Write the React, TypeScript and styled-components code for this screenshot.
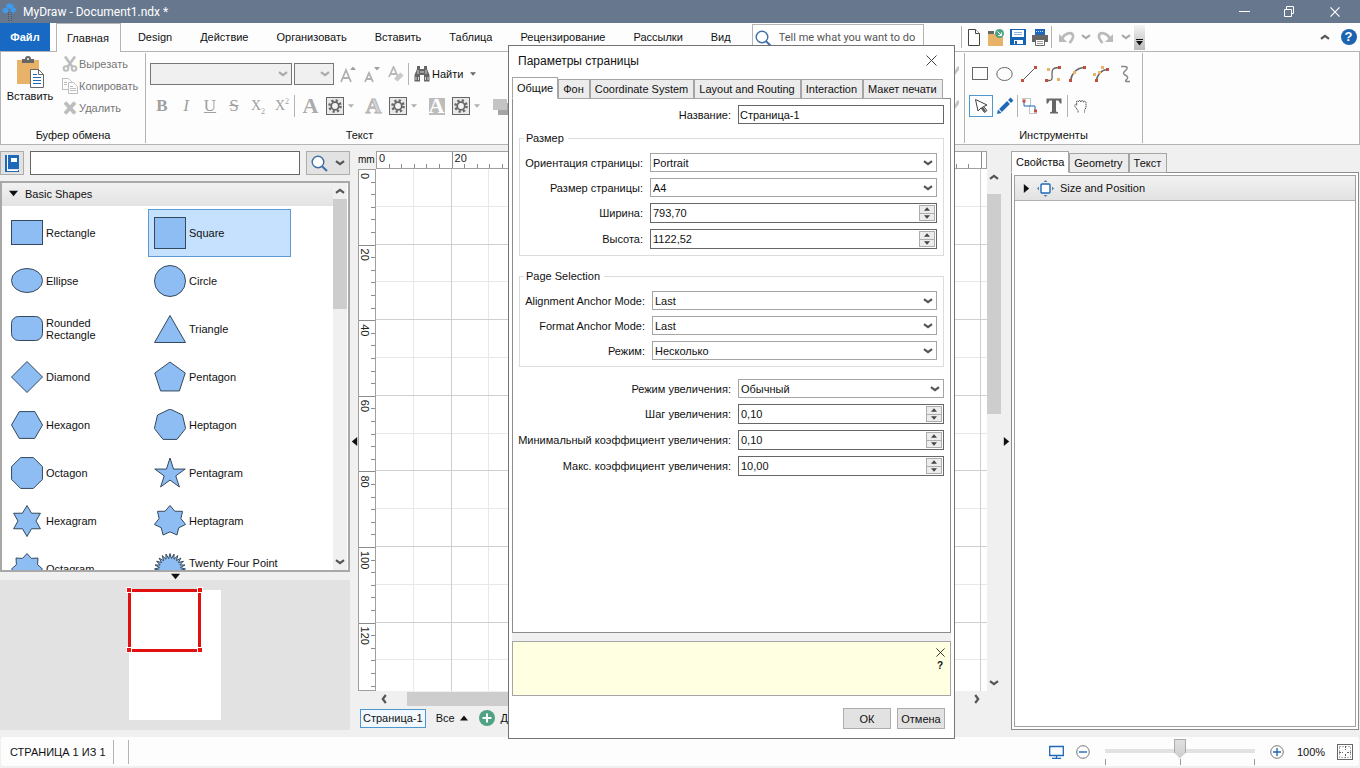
import React from "react";
import styled, { createGlobalStyle, css } from "styled-components";

const Global = createGlobalStyle`
  *, *::before, *::after { box-sizing: border-box; }
  body { margin: 0; background: #f0f0f0; }
  body, button, input, select { font-family: "Liberation Sans", Arial, sans-serif; font-size: 11px; color: #111; }
  button { margin: 0; padding: 0; border: 0; background: none; line-height: 14px; }
  input, select { margin: 0; border-radius: 0; outline: 0; }
  svg { display: block; flex: none; }
`;

/* ---------- frame ---------- */
const Page = styled.div`
  position: relative;
  display: flex;
  flex-direction: column;
  min-height: 100vh;
  background: #f0f0f0;
  padding-bottom: 2px;
  line-height: 14px;
  overflow: hidden;
`;
const TitleBar = styled.header`
  display: flex;
  align-items: center;
  height: 23px;
  background: #67778e;
  color: #fff;
`;
const TitleText = styled.h1`
  flex: 1;
  margin: 0;
  padding-left: 3px;
  font: 400 12px/16px Roboto, "Open Sans", sans-serif;
`;
const WinButton = styled.button`
  display: flex;
  align-items: center;
  justify-content: center;
  width: 45px;
  height: 20px;
  color: #fff;
`;
const WinButtons = styled.div`
  display: flex;
  padding-right: 3px;
`;

const MenuRow = styled.nav`
  position: relative;
  display: flex;
  align-items: center;
  height: 29px;
  background: #fdfdfd;
  border-bottom: 1px solid #b4b4b4;
`;
const FileTab = styled.button`
  align-self: flex-start;
  width: 50px;
  height: 28px;
  margin-right: 3px;
  background: #1769c4;
  color: #fff;
  font-weight: 700;
`;
const MenuTab = styled.button<{ $active?: boolean }>`
  height: 28px;
  padding: 0 14px;
  white-space: nowrap;
  ${(p) =>
    p.$active &&
    css`
      align-self: flex-end;
      height: 29px;
      margin: 0 3px -1px;
      padding: 0 11px 0 10px;
      background: #fdfdfd;
      border: 1px solid #b4b4b4;
      border-bottom: 0;
    `}
`;
const SearchBox = styled.label`
  display: flex;
  align-self: flex-end;
  align-items: center;
  width: 172px;
  height: 27px;
  margin: 0 37px 0 7px;
  padding-left: 2px;
  background: #fff;
  border: 1px solid #b4b4b4;
  border-bottom: 0;
  input {
    flex: 1;
    min-width: 0;
    border: 0;
    padding: 0 0 0 7px;
    background: none;
    font: 11px/16px Roboto, "Open Sans", sans-serif;
  }
  input::placeholder { color: #555; opacity: 1; }
`;
const QuickBar = styled.div`
  display: flex;
  align-items: center;
  height: 28px;
`;
const IconButton = styled.button<{ $w?: number; $h?: number; $on?: boolean }>`
  display: flex;
  flex: none;
  align-items: center;
  justify-content: center;
  width: ${(p) => p.$w ?? 24}px;
  height: ${(p) => p.$h ?? 22}px;
  border: ${(p) => (p.$on ? "1px solid #4f97d1" : "0")};
`;
const Rule = styled.span<{ $h?: number; $m?: number }>`
  flex: none;
  width: 1px;
  height: ${(p) => p.$h ?? 22}px;
  margin: 0 ${(p) => p.$m ?? 0}px;
  background: #b4b4b4;
`;
const Spacer = styled.span`
  flex: 1;
`;
const MoreStrip = styled.button`
  display: flex;
  align-items: flex-end;
  justify-content: center;
  width: 11px;
  height: 25px;
  margin-left: 3px;
  padding-bottom: 4px;
  background: linear-gradient(#f4f4f4, #b9b9b9);
`;

/* ---------- ribbon ---------- */
const Ribbon = styled.div`
  display: flex;
  height: 93px;
  background: #fdfdfd;
  border: 1px solid #b4b4b4;
  border-top: 0;
`;
const Group = styled.section<{ $w: number }>`
  display: flex;
  flex: none;
  flex-direction: column;
  justify-content: space-between;
  width: ${(p) => p.$w}px;
  margin: 1px 0;
  border-right: 1px solid #b4b4b4;
`;
const GroupTitle = styled.h2`
  margin: 0;
  padding-bottom: 1px;
  font-size: 11px;
  font-weight: 400;
  line-height: 14px;
  text-align: center;
`;
const ClipRow = styled.div`
  display: flex;
`;
const PasteButton = styled.button`
  display: flex;
  flex-direction: column;
  align-items: center;
  width: 58px;
  padding-top: 3px;
  gap: 1px;
`;
const ClipList = styled.div`
  display: flex;
  flex-direction: column;
  padding-left: 3px;
`;
const ClipItem = styled.button`
  display: flex;
  align-items: center;
  height: 22px;
  gap: 1px;
  color: #777;
`;
const ToolRows = styled.div`
  display: flex;
  flex-direction: column;
  gap: 10px;
  padding: 10px 0 0 4px;
`;
const ToolRow = styled.div`
  display: flex;
  align-items: center;
  height: 22px;
`;
const DisabledCombo = styled.span<{ $w: number }>`
  position: relative;
  display: flex;
  width: ${(p) => p.$w}px;
  height: 22px;
  margin-right: 2px;
  select {
    width: 100%;
    appearance: none;
    background: #f0f0f0;
    border: 1px solid #777;
    opacity: 1;
  }
`;
const ComboArrow = styled.span`
  position: absolute;
  right: 4px;
  top: 0;
  bottom: 0;
  display: flex;
  align-items: center;
  pointer-events: none;
`;
const Glyph = styled.span<{ $i?: boolean; $u?: boolean; $s?: boolean; $b?: boolean; $small?: boolean }>`
  font: ${(p) => (p.$i ? "italic" : "normal")} ${(p) => (p.$b ? 700 : 400)} ${(p) => (p.$small ? 14 : 17)}px/20px "Liberation Serif", serif;
  color: #a0a0a0;
  text-decoration: ${(p) => (p.$u ? "underline" : p.$s ? "line-through" : "none")};
  sub, sup { font-size: 8px; line-height: 1; }
`;
const FindButton = styled.button`
  display: flex;
  align-items: center;
  gap: 2px;
  margin-left: 5px;
`;
const BrushColumn = styled.div`
  display: flex;
  flex-direction: column;
  align-items: flex-end;
  gap: 24px;
  padding: 13px 5px 0 0;
`;

/* ---------- workspace ---------- */
const Workspace = styled.main`
  display: flex;
  flex: 1;
  min-height: 592px;
  padding-bottom: 7px;
`;
const LeftPanel = styled.aside`
  display: flex;
  flex: none;
  flex-direction: column;
  width: 350px;
`;
const LibraryBar = styled.div`
  display: flex;
  gap: 6px;
  padding: 6px 0;
  input {
    flex: 1;
    min-width: 0;
    height: 24px;
    background: #fff;
    border: 1px solid #666;
  }
`;
const PushButton = styled.button<{ $w: number; $h?: number }>`
  display: flex;
  align-items: center;
  justify-content: center;
  gap: 7px;
  width: ${(p) => p.$w}px;
  height: ${(p) => p.$h ?? 24}px;
  background: #e2e2e2;
  border: 1px solid #adadad;
`;
const Library = styled.div`
  display: flex;
  flex: 1 1 0;
  min-height: 0;
  padding-right: 1px;
  background: #fff;
  border: 2px solid #a8a8a8;
  overflow: hidden;
`;
const LibraryMain = styled.div`
  flex: 1;
  min-width: 0;
  overflow: hidden;
`;
const LibraryHead = styled.button`
  display: flex;
  align-items: center;
  gap: 7px;
  width: 100%;
  height: 23px;
  padding: 0 0 2px 7px;
  background: linear-gradient(#f1f1f1, #e3e3e3);
`;
const ShapeGrid = styled.ul`
  display: grid;
  grid-template-columns: 143px 143px;
  grid-auto-rows: 48px;
  margin: 0;
  padding: 3px;
  list-style: none;
`;
const ShapeItem = styled.li<{ $on?: boolean }>`
  display: flex;
  align-items: center;
  gap: 3px;
  padding-left: 5px;
  line-height: 12px;
  border: 1px solid ${(p) => (p.$on ? "#5b9bd3" : "transparent")};
  background: ${(p) => (p.$on ? "#c5e1fe" : "none")};
  span { max-width: 94px; }
`;
const VScroll = styled.div`
  display: flex;
  flex: none;
  flex-direction: column;
  align-items: center;
  justify-content: space-between;
  width: 14px;
  background: #f0f0f0;
`;
const VThumb = styled.span<{ $h: number; $top?: number }>`
  display: block;
  width: 14px;
  height: ${(p) => p.$h}px;
  margin-top: ${(p) => p.$top ?? 0}px;
  background: #cdcdcd;
`;
const ArrowButton = styled.button<{ $w?: number; $h?: number }>`
  display: flex;
  flex: none;
  align-items: center;
  justify-content: center;
  width: ${(p) => p.$w ?? 14}px;
  height: ${(p) => p.$h ?? 16}px;
`;
const Splitter = styled.div<{ $v?: boolean }>`
  display: flex;
  flex: none;
  align-items: center;
  justify-content: center;
  ${(p) => (p.$v ? "width: 8px; padding-top: 7px;" : "height: 8px;")}
`;
const Preview = styled.div`
  display: flex;
  flex: none;
  justify-content: center;
  height: 150px;
  padding-top: 10px;
  background: #e2e2e2;
`;
const PreviewPage = styled.div`
  width: 92px;
  height: 130px;
  background: #fff;
`;

const Center = styled.section`
  display: flex;
  flex: 1;
  flex-direction: column;
  min-width: 0;
  padding: 6px 0 0;
`;
const CanvasGrid = styled.div`
  display: grid;
  flex: 1;
  grid-template-columns: 18px minmax(0, 1fr) 15px;
  grid-template-rows: 18px minmax(0, 1fr) 15px;
  min-height: 0;
`;
const Unit = styled.span`
  font-size: 10px;
  line-height: 18px;
`;
const Ruler = styled.div`
  background: #fff;
  border: 1px solid #a0a0a0;
  overflow: hidden;
`;
const Canvas = styled.div`
  background: #fff;
  overflow: hidden;
`;
const HScroll = styled.div`
  display: flex;
  grid-column: 2;
  align-items: center;
  padding-top: 1px;
`;
const HThumb = styled.span`
  flex: 1;
  height: 14px;
  margin: 0 0 0 15px;
  background: #cdcdcd;
`;
const HTrack = styled.span`
  width: 10%;
`;
const PageTabs = styled.div`
  display: flex;
  align-items: center;
  gap: 10px;
  height: 24px;
  padding-left: 2px;
`;
const PageTab = styled.button`
  height: 19px;
  padding: 0 2px;
  border: 1px solid #4f97d1;
  background: #f2f8fd;
`;
const InlineButton = styled.button`
  display: flex;
  align-items: center;
  gap: 5px;
`;

const RightPanel = styled.aside`
  display: flex;
  flex: none;
  flex-direction: column;
  width: 350px;
  padding: 6px 1px 0;
`;
const TabStrip = styled.div`
  display: flex;
  align-items: flex-end;
  position: relative;
  margin-bottom: -1px;
`;
const Tab = styled.button<{ $active?: boolean }>`
  height: ${(p) => (p.$active ? 22 : 20)}px;
  padding: 0 5px 0 4px;
  white-space: nowrap;
  border: 1px solid #a5a5a5;
  background: #ececec;
  ${(p) =>
    p.$active &&
    css`
      padding: 0 4px;
      background: #fff;
      border-bottom-color: #fff;
    `}
`;
const PropsFrame = styled.div`
  flex: 1;
  padding: 2px;
  background: #fff;
  border: 1px solid #8c8c8c;
`;
const PropsInner = styled.div`
  height: 100%;
  border: 1px solid #a0a0a0;
`;
const PropsHead = styled.button`
  display: flex;
  align-items: center;
  gap: 6px;
  width: 100%;
  height: 25px;
  padding-left: 7px;
  background: linear-gradient(#f2f2f2, #e2e2e2);
  border-bottom: 1px solid #b0b0b0;
`;

/* ---------- status bar ---------- */
const StatusBar = styled.footer`
  display: flex;
  align-items: center;
  height: 29px;
  margin: 0 1px;
  padding: 0 0 0 9px;
  background: #fdfdfd;
  border-radius: 3px;
`;
const Zoom = styled.div`
  display: flex;
  flex-direction: column;
  width: 150px;
  margin: 0 15px 0 7px;
  input {
    appearance: none;
    width: 100%;
    height: 20px;
    background: linear-gradient(#e2e2e2, #e2e2e2) 0 10px / 100% 4px no-repeat;
  }
  input::-webkit-slider-thumb {
    appearance: none;
    width: 12px;
    height: 20px;
    background: linear-gradient(#e0e0e0, #cfcfcf);
    border: 1px solid #aaa;
    clip-path: polygon(0 0, 100% 0, 100% 70%, 50% 100%, 0 70%);
  }
`;
const Ticks = styled.div`
  display: flex;
  justify-content: space-between;
  span { width: 1px; height: 6px; background: #999; }
`;
const ZoomText = styled.output`
  width: 47px;
  padding-left: 13px;
`;

/* ---------- dialog ---------- */
const Dialog = styled.div`
  position: absolute;
  top: 45px;
  bottom: 29px;
  left: 508px;
  display: flex;
  flex-direction: column;
  width: 447px;
  padding: 0 3px;
  background: #fff;
  border: 1px solid #757575;
`;
const DialogHead = styled.div`
  display: flex;
  align-items: center;
  justify-content: space-between;
  height: 31px;
  padding: 0 8px 2px 6px;
`;
const DialogTitle = styled.h2`
  margin: 0;
  font-size: 12px;
  font-weight: 400;
  line-height: 16px;
`;
const DialogPanel = styled.form`
  display: flex;
  flex: 1;
  flex-direction: column;
  gap: 6px;
  padding: 6px;
  border: 1px solid #8c8c8c;
`;
const Row = styled.div<{ $label: number }>`
  display: grid;
  grid-template-columns: ${(p) => p.$label}px minmax(0, 1fr);
  align-items: center;
  gap: 7px;
  label { justify-self: end; white-space: nowrap; }
`;
const Fieldset = styled.fieldset`
  display: flex;
  flex-direction: column;
  gap: 6px;
  min-width: 0;
  margin: 1px 0 0;
  padding: 8px 6px 6px;
  border: 1px solid #dcdcdc;
  & + & { margin-top: 7px; }
`;
const Legend = styled.legend`
  margin-left: -2px;
  padding: 0 4px 0 2px;
  line-height: 14px;
`;
const SelectWrap = styled.span`
  position: relative;
  display: flex;
  height: 19px;
  select {
    width: 100%;
    appearance: none;
    padding: 0 2px;
    background: #fff;
    border: 1px solid #a5a5a5;
  }
`;
const SpinWrap = styled.span`
  display: flex;
  height: 20px;
  padding: 1px;
  background: #fff;
  border: 1px solid #666;
  input { flex: 1; min-width: 0; padding: 0 1px; border: 0; background: none; }
`;
const SpinButtons = styled.span`
  display: flex;
  flex-direction: column;
  width: 16px;
  button {
    display: flex;
    flex: 1;
    align-items: center;
    justify-content: center;
    background: #ececec;
    border: 1px solid #adadad;
  }
  button + button { margin-top: -1px; }
`;
const TextBox = styled.input`
  height: 19px;
  width: 100%;
  padding: 0 1px;
  background: #fff;
  border: 1px solid #666;
`;
const Stack = styled.div`
  display: flex;
  flex-direction: column;
  gap: 6px;
  padding-top: 6px;
`;
const Gap = styled.div`
  height: 8px;
  background: #f0f0f0;
`;
const Hint = styled.div`
  display: flex;
  flex-direction: column;
  align-items: flex-end;
  height: 55px;
  padding: 3px 4px;
  background: #ffffe1;
  border: 1px solid #a5a5a5;
  button {
    display: flex;
    align-items: center;
    justify-content: center;
    width: 12px;
    height: 14px;
    font-size: 10px;
    font-weight: 700;
  }
`;
const DialogFoot = styled.div`
  display: flex;
  justify-content: flex-end;
  gap: 6px;
  padding: 12px 6px 9px;
`;

/* ---------- small drawings ---------- */
const Chevron = ({ dir = "down", color = "#555", w = 10 }: { dir?: string; color?: string; w?: number }) => {
  const deg = { down: 0, left: 90, up: 180, right: 270 }[dir];
  return (
    <svg width={w} height={w} viewBox="0 0 10 10">
      <path d="M1 3.2 5 6.2 9 3.2" transform={`rotate(${deg} 5 5)`} fill="none" stroke={color} strokeWidth="2.2" />
    </svg>
  );
};
const Tri = ({ dir = "down", w = 6, color = "#111" }: { dir?: string; w?: number; color?: string }) => {
  const d: Record<string, string> = {
    down: "M0 2h10L5 8z",
    up: "M0 8h10L5 2z",
    left: "M8 0v10L2 5z",
    right: "M2 0v10l6-5z",
  };
  return (
    <svg width={w} height={w} viewBox="0 0 10 10">
      <path d={d[dir]} fill={color} />
    </svg>
  );
};
const Cross = ({ s = 11, color = "#555", w = 1 }: { s?: number; color?: string; w?: number }) => (
  <svg width={s} height={s} viewBox="0 0 11 11">
    <path d="M.5.5l10 10M10.5.5l-10 10" stroke={color} strokeWidth={w} />
  </svg>
);
const Magnifier = ({ s = 17 }: { s?: number }) => (
  <svg width={s} height={s} viewBox="0 0 17 17" fill="none">
    <circle cx="7" cy="7" r="5.8" stroke="#3f6fa5" strokeWidth="1.4" fill="#fff" />
    <path d="M11 11.2l5 4.8" stroke="#3f6fa5" strokeWidth="2" />
  </svg>
);
const Logo = () => (
  <svg width="20" height="20" viewBox="0 0 20 20">
    <path d="M8.500 10v9M11.500 10v9" stroke="#475263" strokeDasharray="1 1" />
    <g fill="#3d9cf0">
      <path d="M6 3l3-1.500 4 1L14 5l-3 2-4-1z" />
      <path d="M2.500 7.500L5 5.500l3 1 .5 3L6 11.500l-3-1z" />
      <path d="M10.500 8L13 5.500l3 1V9l-3 2-2-1z" />
    </g>
  </svg>
);
const PasteIcon = () => (
  <svg width="30" height="32" viewBox="0 0 30 32">
    <rect x="2" y="4" width="22" height="24" fill="#e8b269" />
    <path d="M7 3h3a3 3 0 016 0h3v4H7z" fill="#666" />
    <circle cx="13" cy="3" r="1" fill="#fff" />
    <path d="M15.500 13.500h8l5 5v13h-13z" fill="#fff" stroke="#666" />
    <path d="M23.500 13.500v5h5" fill="none" stroke="#666" />
    <path d="M18 18.500h4M18 21.500h8M18 24.500h8M18 27.500h8" stroke="#1d68b8" />
  </svg>
);
const CutIcon = () => (
  <svg width="16" height="16" viewBox="0 0 16 16" fill="none" stroke="#bdbdbd" strokeWidth="2.600">
    <path d="M3 .5l7.500 10.500M13 .5L5.500 11" />
    <circle cx="4" cy="12.500" r="2.300" strokeWidth="2" />
    <circle cx="12" cy="12.500" r="2.300" strokeWidth="2" />
  </svg>
);
const CopyIcon = () => (
  <svg width="16" height="16" viewBox="0 0 16 16" fill="#fdfdfd" stroke="#bdbdbd">
    <path d="M.5.5h6l3 3v8h-9z" />
    <path d="M6.500 4.500h5l4 4v7h-9z" />
    <path d="M8 8.500h3M8 10.500h6M8 12.500h6M2 4.500h3M2 6.500h3" />
  </svg>
);
const DeleteIcon = () => (
  <svg width="16" height="14" viewBox="0 0 16 14" stroke="#bdbdbd" strokeWidth="3.800">
    <path d="M3 1.500l10 11M13 1.500l-10 11" />
  </svg>
);
const FontSizeIcon = ({ up }: { up?: boolean }) => (
  <svg width="16" height="17" viewBox="0 0 16 17" fill="none" stroke="#b0b0b0" strokeWidth="1.800">
    <path d={up ? "M1 16L6 4l5 12M3 12h6" : "M1 16L5 7l4 9M3 13h4"} />
    <path d={up ? "M10 4h6l-3-3.500z" : "M10 1h6l-3 3.500z"} fill="#a0a0a0" stroke="none" />
  </svg>
);
const ClearIcon = () => (
  <svg width="16" height="17" viewBox="0 0 16 17" fill="none" stroke="#b8b8b8" strokeWidth="1.800">
    <path d="M1 11L5.500 1 10 11M3 8h5" />
    <path d="M6.500 12.500l6-5.500L15 9.500 9.500 15z" fill="#c8c8c8" stroke="#c8c8c8" strokeWidth="1" />
  </svg>
);
const Binoculars = () => (
  <svg width="16" height="16" viewBox="0 0 16 16">
    <g fill="#666">
      <path d="M3 0h3v3h4V0h3v3l2.500 6v6.500H10V9H6v6.500H.5V9L3 3z" />
    </g>
    <path d="M4 4v4M12 4v4M2 11v3M4.500 11v3M11.500 11v3M14 11v3M6 6h4" stroke="#d5d5d5" />
  </svg>
);
const Gear = () => (
  <svg width="18" height="18" viewBox="0 0 18 18">
    <rect x=".5" y=".5" width="17" height="17" fill="#e9e9e9" stroke="#666" />
    <circle cx="9" cy="9" r="5.600" fill="none" stroke="#666" strokeWidth="2.400" strokeDasharray="2.200 2.200" />
    <circle cx="9" cy="9" r="3.800" fill="#f4f4f4" stroke="#666" strokeWidth="1.800" />
  </svg>
);
const BigA = styled.span<{ $kind: "fill" | "outline" | "back" }>`
  width: 16px;
  height: 17px;
  font: 700 22px/15px "Liberation Serif", serif;
  text-align: center;
  color: ${(p) => (p.$kind === "fill" ? "#ababab" : p.$kind === "outline" ? "#d4d4d4" : "#fff")};
  -webkit-text-stroke: ${(p) => (p.$kind === "outline" ? "1px #b4b4b4" : "0")};
  background: ${(p) => (p.$kind === "back" ? "#bcbcbc" : "none")};
`;
const ShadowIcon = () => (
  <svg width="20" height="17" viewBox="0 0 20 17">
    <path d="M5 5h15v12H5z" fill="#a5a5a5" />
    <path d="M0 1h14v11H0z" fill="#c4c4c4" />
  </svg>
);
const BrushBit = () => (
  <svg width="8" height="10" viewBox="0 0 8 10">
    <path d="M1 10L6 1l2-1v4L3 10z" fill="#c4c4c4" />
  </svg>
);
const NewIcon = () => (
  <svg width="14" height="17" viewBox="0 0 14 17" fill="#fff" stroke="#444">
    <path d="M1.500.5h7l4 4v12h-11z" />
    <path d="M8.500.5v4h4" />
  </svg>
);
const OpenIcon = () => (
  <svg width="16" height="17" viewBox="0 0 16 17">
    <path d="M0 2h6v3H0z" fill="#666" />
    <path d="M0 5h15v12H0z" fill="#e8b269" />
    <circle cx="11.500" cy="4.500" r="4.500" fill="#4fa384" />
    <path d="M9.500 2.500l4 4M13.500 3.500v3h-3" stroke="#fff" fill="none" />
  </svg>
);
const SaveIcon = () => (
  <svg width="16" height="16" viewBox="0 0 16 16">
    <path d="M0 0h16v16H0z" fill="#1563b5" />
    <path d="M2 1h12v7H2zM4 11h9v4H4z" fill="#fff" />
    <path d="M4 3.500h8M4 5.500h8" stroke="#8fb5dd" />
    <path d="M5 12h2v3H5z" fill="#1563b5" />
  </svg>
);
const PrintIcon = () => (
  <svg width="16" height="17" viewBox="0 0 16 17">
    <path d="M0 6h16v7H0z" fill="#666" />
    <path d="M3 0h10v6H3z" fill="#1d68b8" />
    <path d="M3.500 10.500h9v6h-9z" fill="#fff" stroke="#666" />
    <path d="M5 12.500h6M5 14.500h6" stroke="#999" />
    <path d="M4 2.500h8" stroke="#cfe0f2" strokeDasharray="1 1" />
  </svg>
);
const UndoIcon = ({ flip }: { flip?: boolean }) => (
  <svg width="17" height="14" viewBox="0 0 17 14" fill="none" stroke="#bababa">
    <g transform={flip ? "translate(17 0) scale(-1 1)" : undefined}>
      <path d="M4 9C6 3.500 13.500 1 15 5.500c.6 3-1.500 5-3.500 7.500" strokeWidth="2.600" />
      <path d="M1 4v8h8z" fill="#bababa" stroke="none" />
    </g>
  </svg>
);
const HelpIcon = styled.span`
  display: flex;
  align-items: center;
  justify-content: center;
  width: 16px;
  height: 16px;
  border-radius: 50%;
  background: #1d64b0;
  color: #fff;
  font-size: 13px;
  font-weight: 700;
`;
const BookIcon = () => (
  <svg width="14" height="17" viewBox="0 0 14 17">
    <path d="M0 0h14v14H3v1h11v2H0z" fill="#1d68b8" />
    <path d="M2.500 0v15" stroke="#fff" />
    <path d="M6 3h6v4H6z" fill="#fff" />
    <path d="M2 15h11v1H2z" fill="#fff" />
  </svg>
);

const red = "#c0503c";
const amber = "#e8b269";
const dot = (x: number, y: number, c: string) => <rect key={`${x}-${y}`} x={x - 1.5} y={y - 1.5} width="3" height="3" fill={c} />;
const drawTools: { label: string; art: React.ReactNode }[] = [
  { label: "Rectangle", art: <rect x=".5" y="2.500" width="15" height="12" stroke="#666" /> },
  { label: "Ellipse", art: <ellipse cx="8.500" cy="9" rx="7.700" ry="6.500" stroke="#666" /> },
  { label: "Line", art: <><path d="M2 16L16 2" stroke="#555" />{dot(2.5, 15.5, red)}{dot(15.5, 2.5, red)}</> },
  { label: "Bezier", art: <><path d="M2 15.500h3c4 0 3-3 3-6.500s0-6.500 7-6.500" stroke="#666" strokeWidth="1.300" />{dot(2.5, 15.5, red)}{dot(15.5, 2.5, red)}{dot(4.5, 4.5, amber)}{dot(14.5, 14.5, amber)}</> },
  { label: "Arc", art: <><path d="M2.500 16C3.500 9 8 3 16 2.500" stroke="#666" strokeWidth="1.600" />{dot(2.5, 15.5, red)}{dot(16.5, 2.5, red)}{dot(6.5, 7.5, amber)}</> },
  { label: "Curve", art: <><path d="M4.500 16C5 10 9 5 15 4.500" stroke="#666" strokeWidth="1.600" />{dot(4.5, 15.5, red)}{dot(15.5, 4.5, red)}{dot(2.5, 9.5, amber)}{dot(7.5, 7.5, amber)}{dot(10.5, 2.5, amber)}</> },
  { label: "Freehand", art: <path d="M5 1.500h3.500c2.500 0 3.500 1 2 3L8 7c-1 1.500-.5 2.300 1 3 2.500 1.200 3.500 2.300 2 4-1.200 1.300-2.500 2.500 0 2.500h3" stroke="#888" strokeWidth="1.400" /> },
];
const Art = ({ children, s = 18 }: { children: React.ReactNode; s?: number }) => (
  <svg width={s} height={s} viewBox="0 0 18 18" fill="none">
    {children}
  </svg>
);

/* ---------- stencil shapes ---------- */
const polygon = (n: number, rx: number, ry: number, inner = 1, start = -90, cy = 16) => {
  const count = inner === 1 ? n : n * 2;
  return Array.from({ length: count }, (_, i) => {
    const a = ((start + (360 / count) * i) * Math.PI) / 180;
    const k = inner !== 1 && i % 2 ? inner : 1;
    return `${(16 + rx * k * Math.cos(a)).toFixed(2)},${(cy + ry * k * Math.sin(a)).toFixed(2)}`;
  }).join(" ");
};
const shapes: { name: string; art: React.ReactNode; on?: boolean }[] = [
  { name: "Rectangle", art: <rect x=".5" y="3.500" width="31" height="24" /> },
  { name: "Square", art: <rect x=".5" y=".5" width="31" height="31" />, on: true },
  { name: "Ellipse", art: <ellipse cx="16" cy="15.500" rx="15.500" ry="12" /> },
  { name: "Circle", art: <circle cx="16" cy="16" r="15.500" /> },
  { name: "Rounded Rectangle", art: <rect x=".5" y="3.500" width="31" height="24" rx="7" /> },
  { name: "Triangle", art: <path d="M16 2.500L31.500 29.500H.5z" /> },
  { name: "Diamond", art: <path d="M16 .5L31.500 16 16 31.500.5 16z" /> },
  { name: "Pentagon", art: <polygon points={polygon(5, 16, 16, 1, -90, 17)} /> },
  { name: "Hexagon", art: <polygon points={polygon(6, 15.5, 15.5, 1, 0)} /> },
  { name: "Heptagon", art: <polygon points={polygon(7, 16, 16)} /> },
  { name: "Octagon", art: <polygon points={polygon(8, 16.7, 16.7, 1, 22.5)} /> },
  { name: "Pentagram", art: <polygon points={polygon(5, 16, 16, 0.38, -90, 17)} /> },
  { name: "Hexagram", art: <polygon points={polygon(6, 15.5, 15.5, 0.58)} /> },
  { name: "Heptagram", art: <polygon points={polygon(7, 16, 15.5, 0.7)} /> },
  { name: "Octagram", art: <polygon points={polygon(8, 15.5, 15.5, 0.74)} /> },
  { name: "Twenty Four Point Star", art: <polygon points={polygon(24, 15.5, 15.5, 0.68)} /> },
];

/* ---------- rulers and grid ---------- */
const CM = 37.8;
const TICK = CM / 3;
const px = (v: number) => Math.round(v) - 0.5;
const range = (count: number) => Array.from({ length: count }, (_, i) => i);
const TopTicks = () => (
  <svg width="100%" height="16">
    {range(90).map((i) => (
      <path key={i} d={`M${px(i * TICK)} ${i % 6 ? 12 : 0}V16`} stroke="#8c8c8c" />
    ))}
    {range(8).map((i) => (
      <text key={i} x={i * CM * 2 + 2} y="10" fontSize="11" fill="#222">{i * 20}</text>
    ))}
  </svg>
);
const LeftTicks = () => (
  <svg width="16" height="100%">
    {range(90).map((i) => (
      <path key={i} d={`M${i % 6 ? 12 : 0} ${px(i * TICK)}H16`} stroke="#8c8c8c" />
    ))}
    {range(7).map((i) => (
      <text key={i} transform={`translate(2 ${i * CM * 2 + 3}) rotate(90)`} fontSize="11" fill="#222">{i * 20}</text>
    ))}
  </svg>
);
const GridLines = () => (
  <svg width="100%" height="100%">
    {[1, 0].map((odd) =>
      range(50)
        .filter((i) => i > 0 && i % 2 === odd)
        .map((i) => (
          <g key={i} stroke={odd ? "#e8e8e8" : "#cfcfcf"}>
            <line x1={px(i * CM)} x2={px(i * CM)} y1="0" y2="100%" />
            <line y1={px(i * CM)} y2={px(i * CM)} x1="0" x2="100%" />
          </g>
        ))
    )}
  </svg>
);

/* ---------- form controls ---------- */
const SelectRow = ({ id, label, value, w }: { id: string; label: string; value: string; w: number }) => (
  <Row $label={w}>
    <label htmlFor={id}>{label}</label>
    <SelectWrap>
      <select id={id} defaultValue={value}>
        <option>{value}</option>
      </select>
      <ComboArrow><Chevron /></ComboArrow>
    </SelectWrap>
  </Row>
);
const SpinRow = ({ id, label, value, w }: { id: string; label: string; value: string; w: number }) => (
  <Row $label={w}>
    <label htmlFor={id}>{label}</label>
    <SpinWrap>
      <input id={id} defaultValue={value} />
      <SpinButtons>
        <button type="button" aria-label="Increase"><Tri dir="up" color="#444" /></button>
        <button type="button" aria-label="Decrease"><Tri color="#444" /></button>
      </SpinButtons>
    </SpinWrap>
  </Row>
);

const menu = ["Главная", "Design", "Действие", "Организовать", "Вставить", "Таблица", "Рецензирование", "Рассылки", "Вид"];
const pageTabs = ["Общие", "Фон", "Coordinate System", "Layout and Routing", "Interaction", "Макет печати"];

const PageSetup = () => (
  <Dialog role="dialog" aria-labelledby="setup-title">
    <DialogHead>
      <DialogTitle id="setup-title">Параметры страницы</DialogTitle>
      <IconButton aria-label="Close" type="button"><Cross color="#444" /></IconButton>
    </DialogHead>
    <TabStrip>
      {pageTabs.map((t, i) => <Tab key={t} $active={i === 0}>{t}</Tab>)}
    </TabStrip>
    <DialogPanel>
      <Row $label={212}>
        <label htmlFor="name">Название:</label>
        <TextBox id="name" defaultValue="Страница-1" />
      </Row>
      <Fieldset>
        <Legend>Размер</Legend>
        <SelectRow id="orient" label="Ориентация страницы:" value="Portrait" w={117} />
        <SelectRow id="size" label="Размер страницы:" value="A4" w={117} />
        <SpinRow id="width" label="Ширина:" value="793,70" w={117} />
        <SpinRow id="height" label="Высота:" value="1122,52" w={117} />
      </Fieldset>
      <Fieldset>
        <Legend>Page Selection</Legend>
        <SelectRow id="align" label="Alignment Anchor Mode:" value="Last" w={119} />
        <SelectRow id="format" label="Format Anchor Mode:" value="Last" w={119} />
        <SelectRow id="mode" label="Режим:" value="Несколько" w={119} />
      </Fieldset>
      <Stack>
        <SelectRow id="zmode" label="Режим увеличения:" value="Обычный" w={212} />
        <SpinRow id="zstep" label="Шаг увеличения:" value="0,10" w={212} />
        <SpinRow id="zmin" label="Минимальный коэффициент увеличения:" value="0,10" w={212} />
        <SpinRow id="zmax" label="Макс. коэффициент увеличения:" value="10,00" w={212} />
      </Stack>
    </DialogPanel>
    <Gap />
    <Hint>
      <button aria-label="Close hint"><Cross s={9} color="#111" /></button>
      <button>?</button>
    </Hint>
    <DialogFoot>
      <PushButton $w={48} $h={21}>ОК</PushButton>
      <PushButton $w={48} $h={21}>Отмена</PushButton>
    </DialogFoot>
  </Dialog>
);

export default function App() {
  return (
    <Page>
      <Global />
      <TitleBar>
        <Logo />
        <TitleText>MyDraw - Document1.ndx *</TitleText>
        <WinButtons>
          <WinButton aria-label="Minimize"><svg width="11" height="11"><path d="M0 5.500h11" stroke="#fff" /></svg></WinButton>
          <WinButton aria-label="Restore"><svg width="11" height="11" fill="none" stroke="#fff"><path d="M.5 3.500h7v7h-7zM2.500 3V.5h7v7H8" /></svg></WinButton>
          <WinButton aria-label="Close"><Cross s={10} color="#fff" w={1.3} /></WinButton>
        </WinButtons>
      </TitleBar>

      <MenuRow>
        <FileTab>Файл</FileTab>
        {menu.map((m, i) => <MenuTab key={m} $active={i === 0}>{m}</MenuTab>)}
        <SearchBox>
          <Magnifier />
          <input placeholder="Tell me what you want to do" aria-label="Tell me what you want to do" />
        </SearchBox>
        <QuickBar>
          <Rule />
          <IconButton aria-label="New"><NewIcon /></IconButton>
          <IconButton $w={20} aria-label="Open"><OpenIcon /></IconButton>
          <IconButton aria-label="Save"><SaveIcon /></IconButton>
          <IconButton $w={20} aria-label="Print"><PrintIcon /></IconButton>
          <Rule $m={1} />
          <IconButton $w={28} aria-label="Undo"><UndoIcon /></IconButton>
          <IconButton $w={10} aria-label="Undo list"><Chevron color="#aaa" /></IconButton>
          <IconButton $w={30} aria-label="Redo"><UndoIcon flip /></IconButton>
          <IconButton $w={10} aria-label="Redo list"><Chevron color="#aaa" /></IconButton>
          <MoreStrip aria-label="More">
            <svg width="7" height="7"><path d="M0 .5h7" stroke="#111" /><path d="M0 2h7L3.500 6.500z" fill="#111" /></svg>
          </MoreStrip>
        </QuickBar>
        <Spacer />
        <IconButton aria-label="Collapse"><Chevron dir="up" /></IconButton>
        <IconButton $w={23} aria-label="Help"><HelpIcon>?</HelpIcon></IconButton>
      </MenuRow>

      <Ribbon>
        <Group $w={145}>
          <ClipRow>
            <PasteButton><PasteIcon />Вставить</PasteButton>
            <ClipList>
              <ClipItem><CutIcon />Вырезать</ClipItem>
              <ClipItem><CopyIcon />Копировать</ClipItem>
              <ClipItem><DeleteIcon />Удалить</ClipItem>
            </ClipList>
          </ClipRow>
          <GroupTitle>Буфер обмена</GroupTitle>
        </Group>
        <Group $w={428}>
          <ToolRows>
            <ToolRow>
              <DisabledCombo $w={142}>
                <select disabled aria-label="Font" />
                <ComboArrow><Chevron color="#aaa" /></ComboArrow>
              </DisabledCombo>
              <DisabledCombo $w={40}>
                <select disabled aria-label="Font size" />
                <ComboArrow><Chevron color="#aaa" /></ComboArrow>
              </DisabledCombo>
              <IconButton aria-label="Grow font"><FontSizeIcon up /></IconButton>
              <IconButton aria-label="Shrink font"><FontSizeIcon /></IconButton>
              <IconButton aria-label="Clear format"><ClearIcon /></IconButton>
              <Rule />
              <FindButton><Binoculars />Найти</FindButton>
              <IconButton $w={20} aria-label="Find options"><Tri color="#666" /></IconButton>
            </ToolRow>
            <ToolRow>
              <IconButton aria-label="Bold"><Glyph $b>B</Glyph></IconButton>
              <IconButton aria-label="Italic"><Glyph $i>I</Glyph></IconButton>
              <IconButton aria-label="Underline"><Glyph $u>U</Glyph></IconButton>
              <IconButton aria-label="Strike"><Glyph $s>S</Glyph></IconButton>
              <IconButton aria-label="Subscript"><Glyph $small>X<sub>2</sub></Glyph></IconButton>
              <IconButton aria-label="Superscript"><Glyph $small>X<sup>2</sup></Glyph></IconButton>
              <Rule />
              {(["fill", "outline", "back"] as const).map((k) => (
                <React.Fragment key={k}>
                  <IconButton $w={31} aria-label={`Text ${k}`}><BigA $kind={k}>A</BigA></IconButton>
                  <IconButton $w={18} aria-label={`Text ${k} settings`}><Gear /></IconButton>
                  <IconButton $w={14} aria-label={`Text ${k} list`}><Tri color="#b0b0b0" /></IconButton>
                </React.Fragment>
              ))}
              <IconButton $w={38} aria-label="Text shadow"><ShadowIcon /></IconButton>
            </ToolRow>
          </ToolRows>
          <GroupTitle>Текст</GroupTitle>
        </Group>
        <Group $w={391}>
          <BrushColumn><BrushBit /><BrushBit /></BrushColumn>
        </Group>
        <Group $w={178}>
          <ToolRows>
            <ToolRow>
              {drawTools.map((t) => (
                <IconButton key={t.label} aria-label={t.label}><Art>{t.art}</Art></IconButton>
              ))}
            </ToolRow>
            <ToolRow>
              <IconButton $on aria-label="Pointer">
                <Art><path d="M3.500 2.500L6 14l3-3 3.500 4.500 2.500-2L11.500 9.500 15 8z" fill="#fff" stroke="#444" /><path d="M10 10l3 4.500" stroke="#555" strokeWidth="2" /></Art>
              </IconButton>
              <IconButton aria-label="Pencil">
                <Art><path d="M4.500 13.500l8-8M13.500 4.500L16 2" stroke="#1d68b8" strokeWidth="4" /><path d="M1 17l1-4.500L5.500 16z" fill="#1d68b8" /></Art>
              </IconButton>
              <Rule />
              <IconButton aria-label="Connector">
                <Art>
                  <path d="M1.500 1.500h8v8M8.500 8.500v8h8" stroke="#888" strokeDasharray="1 1" />
                  <path d="M3 4v5h11v5" stroke="#1d68b8" />
                  {dot(3, 4, red)}{dot(14.5, 14, red)}
                </Art>
              </IconButton>
              <IconButton aria-label="Text">
                <Art><path d="M1.500 1.500h15v5H15l-1.500-3H11v11l2 .7v1.300H5v-1.300l2-.7v-11H4.500L3 6.500H1.500z" fill="#666" /></Art>
              </IconButton>
              <Rule $m={1} />
              <IconButton aria-label="Pan">
                <Art><path d="M6 15.500v-2L3 9.500c-1-2 .5-2.500 2-1.500l-.5-3c0-1.500 2-1.500 2 0 0-2 2.500-2 2.500 0 0-2 2.500-2 2.500.2 0-1.500 2.500-1.200 2.500.3v5l-1.500 3v2" stroke="#555" strokeDasharray="1.500 .5" /></Art>
              </IconButton>
            </ToolRow>
          </ToolRows>
          <GroupTitle>Инструменты</GroupTitle>
        </Group>
      </Ribbon>

      <Workspace>
        <LeftPanel>
          <LibraryBar>
            <PushButton $w={24} aria-label="Library"><BookIcon /></PushButton>
            <input aria-label="Search shapes" />
            <PushButton $w={44} aria-label="Search"><Magnifier /><Chevron /></PushButton>
          </LibraryBar>
          <Library>
            <LibraryMain>
              <LibraryHead><Tri w={9} />Basic Shapes</LibraryHead>
              <ShapeGrid>
                {shapes.map((s) => (
                  <ShapeItem key={s.name} $on={s.on}>
                    <svg width="32" height="32" viewBox="0 0 32 32" fill="#8ebdf3" stroke="#34495e">{s.art}</svg>
                    <span>{s.name}</span>
                  </ShapeItem>
                ))}
              </ShapeGrid>
            </LibraryMain>
            <VScroll>
              <div>
                <ArrowButton aria-label="Scroll up"><Chevron dir="up" /></ArrowButton>
                <VThumb $h={110} />
              </div>
              <ArrowButton aria-label="Scroll down"><Chevron /></ArrowButton>
            </VScroll>
          </Library>
          <Splitter><Tri w={9} /></Splitter>
          <Preview>
            <PreviewPage>
              <svg width="76" height="66" viewBox="3 4 76 66" overflow="visible">
                <rect x="3.500" y="4.500" width="70" height="60" fill="none" stroke="#e01010" strokeWidth="3" />
                {[[3, 4], [74, 4], [3, 64], [74, 64]].map(([x, y]) => (
                  <rect key={`${x}${y}`} x={x - 2.5} y={y - 2.5} width="5" height="5" fill="#f01010" stroke="#fff" />
                ))}
              </svg>
            </PreviewPage>
          </Preview>
        </LeftPanel>
        <Splitter $v><Tri dir="left" w={9} /></Splitter>
        <Center>
          <CanvasGrid>
            <Unit>mm</Unit>
            <Ruler><TopTicks /></Ruler>
            <span />
            <Ruler><LeftTicks /></Ruler>
            <Canvas><GridLines /></Canvas>
            <VScroll>
              <div>
                <ArrowButton aria-label="Canvas up"><Chevron dir="up" /></ArrowButton>
                <VThumb $h={220} $top={9} />
              </div>
              <ArrowButton aria-label="Canvas down"><Chevron /></ArrowButton>
            </VScroll>
            <HScroll>
              <ArrowButton $w={16} $h={14} aria-label="Canvas left"><Chevron dir="left" /></ArrowButton>
              <HThumb />
              <HTrack />
              <ArrowButton $w={20} $h={14} aria-label="Canvas right"><Chevron dir="right" /></ArrowButton>
            </HScroll>
          </CanvasGrid>
          <PageTabs>
            <PageTab>Страница-1</PageTab>
            <InlineButton>Все<Tri dir="up" w={8} /></InlineButton>
            <InlineButton>
              <svg width="18" height="18" viewBox="0 0 18 18"><circle cx="9" cy="9" r="8" fill="#4fa384" /><path d="M9 4.500v9M4.500 9h9" stroke="#fff" strokeWidth="2" /></svg>
              Добавить
            </InlineButton>
          </PageTabs>
        </Center>
        <Splitter $v><Tri dir="right" w={9} /></Splitter>
        <RightPanel>
          <TabStrip>
            <Tab $active>Свойства</Tab>
            <Tab>Geometry</Tab>
            <Tab>Текст</Tab>
          </TabStrip>
          <PropsFrame>
            <PropsInner>
              <PropsHead>
                <Tri dir="right" w={9} />
                <svg width="17" height="17" viewBox="0 0 17 17">
                  <rect x="4" y="4" width="9" height="9" rx="1" fill="#fff" stroke="#1d68b8" strokeWidth="1.400" />
                  <path d="M6.500 2L8.500 0l2 2zM6.500 15l2 2 2-2zM2 6.500l-2 2 2 2zM15 6.500l2 2-2 2z" fill="#5c7f9f" />
                </svg>
                Size and Position
              </PropsHead>
            </PropsInner>
          </PropsFrame>
        </RightPanel>
      </Workspace>

      <StatusBar>
        СТРАНИЦА 1 ИЗ 1
        <Rule $h={24} $m={7} />
        <Rule $h={24} $m={7} />
        <Spacer />
        <IconButton aria-label="Screen">
          <svg width="15" height="14" viewBox="0 0 15 14" fill="none" stroke="#1d68b8"><path d="M.7 1.500h13.600v9H.7zM7.500 11v2M3 13.500h9" strokeWidth="1.300" /></svg>
        </IconButton>
        <IconButton $w={30} aria-label="Zoom out">
          <svg width="14" height="14" fill="none"><circle cx="7" cy="7" r="6.300" stroke="#777" /><path d="M3 7h8" stroke="#1d68b8" strokeWidth="1.400" /></svg>
        </IconButton>
        <Zoom>
          <input type="range" aria-label="Zoom" min={0} max={200} defaultValue={100} />
          <Ticks><span /><span /><span /></Ticks>
        </Zoom>
        <IconButton $w={14} aria-label="Zoom in">
          <svg width="14" height="14" fill="none"><circle cx="7" cy="7" r="6.300" stroke="#777" /><path d="M3 7h8M7 3v8" stroke="#1d68b8" strokeWidth="1.400" /></svg>
        </IconButton>
        <ZoomText>100%</ZoomText>
        <IconButton $w={28} aria-label="Fit page">
          <svg width="16" height="16" fill="none" stroke="#666"><rect x=".5" y=".5" width="15" height="15" /><path d="M8.500 2v4M8.500 10v4M2 8.500h4M10 8.500h4" strokeDasharray="2 1" /><rect x="2.500" y="2.500" width="11" height="11" strokeDasharray="1 2" /></svg>
        </IconButton>
      </StatusBar>

      <PageSetup />
    </Page>
  );
}
